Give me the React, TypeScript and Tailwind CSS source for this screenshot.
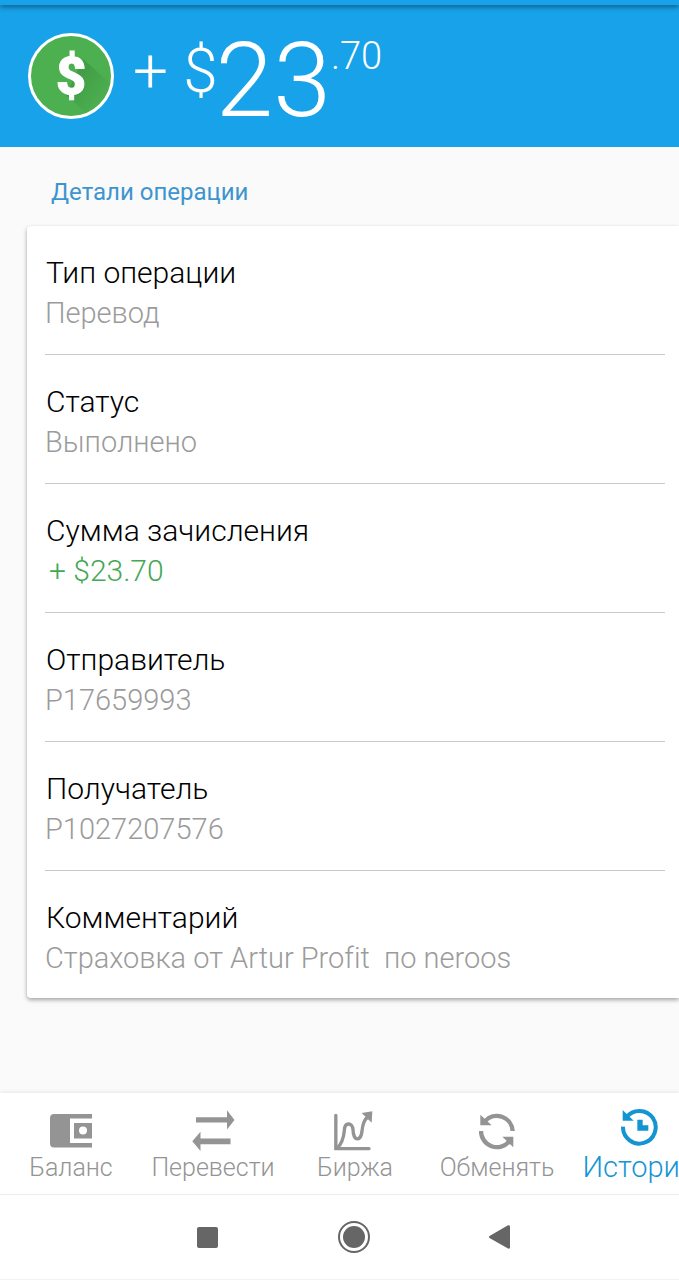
import type { ReactNode } from "react";

type Detail = {
  label: string;
  value: string;
  income?: boolean;
};

const DETAILS: Detail[] = [
  { label: "Тип операции", value: "Перевод" },
  { label: "Статус", value: "Выполнено" },
  { label: "Сумма зачисления", value: "+ $23.70", income: true },
  { label: "Отправитель", value: "P17659993" },
  { label: "Получатель", value: "P1027207576" },
  { label: "Комментарий", value: "Страховка от Artur Profit  по neroos" },
];

function WalletIcon() {
  return (
    <svg width="42" height="34" viewBox="0 0 42 34" fill="currentColor" aria-hidden="true">
      <path d="M4 0H42V4.500H20V29H42V33.500H4A4 4 0 0 1 0 29.500V4A4 4 0 0 1 4 0Z" />
      <path
        fillRule="evenodd"
        d="M24 9H42V24.500H24ZM33 12.500A4 4 0 1 0 33 20.500A4 4 0 1 0 33 12.500Z"
      />
    </svg>
  );
}

function TransferIcon() {
  return (
    <svg width="43" height="41" viewBox="0 0 43 41" fill="currentColor" aria-hidden="true">
      <path d="M4 7.200H35V.200L42.500 9.900L35 19.600V12.600H4Z" />
      <path d="M38.500 28.500V34.200H8.500V41L.300 31.200L8.500 21.700V28.500Z" />
    </svg>
  );
}

function ChartIcon() {
  return (
    <svg width="43" height="40" viewBox="0 0 129 120" fill="none" stroke="currentColor" aria-hidden="true">
      <path d="M5.500 13V113H105" strokeWidth="10" strokeLinecap="round" />
      <path
        d="M9 112C24 98 29 82 31 58C32 33 55 33 57 56C58 92 81 92 84 60C86 38 91 25 102 18"
        strokeWidth="10"
      />
      <path d="M83 6L115 1L113 35Z" fill="currentColor" stroke="none" />
    </svg>
  );
}

function ExchangeIcon() {
  return (
    <svg width="36" height="38" viewBox="0 0 108 114" fill="none" stroke="currentColor" aria-hidden="true">
      <path d="M17 28A48 48 0 0 1 101 57" strokeWidth="13" />
      <path d="M91 88A48 48 0 0 1 6 57" strokeWidth="13" />
      <path d="M4 8V40H38Z" fill="currentColor" stroke="none" />
      <path d="M103 106V74H70Z" fill="currentColor" stroke="none" />
    </svg>
  );
}

function HistoryIcon() {
  return (
    <svg width="37" height="38" viewBox="0 0 111 114" fill="none" stroke="currentColor" aria-hidden="true">
      <path d="M16 28A49 49 0 1 1 6 56" strokeWidth="12" />
      <path d="M5 6V38H38Z" fill="currentColor" stroke="none" />
      <path d="M57 35V60H82" strokeWidth="16" />
    </svg>
  );
}

function DollarCoin() {
  return (
    <svg width="86" height="86" viewBox="0 0 86 86" className="mt-0.5 shrink-0" aria-hidden="true">
      <defs>
        <linearGradient id="coinShade" x1="0" y1="0" x2="1" y2="1">
          <stop offset="0.3" stopColor="#2e7d32" stopOpacity="0.35" />
          <stop offset="0.8" stopColor="#2e7d32" stopOpacity="0" />
        </linearGradient>
      </defs>
      <circle cx="43" cy="43" r="41.500" fill="#4caf50" stroke="#fff" strokeWidth="3" />
      <path d="M55 26L82 50A40 40 0 0 1 58 80L38 62Z" fill="url(#coinShade)" />
      <text
        x="43"
        y="61"
        textAnchor="middle"
        fill="#fff"
        stroke="#fff"
        strokeWidth="1"
        className="font-['Roboto'] text-[52px] font-black"
      >
        $
      </text>
    </svg>
  );
}

type Tab = {
  label: string;
  icon: ReactNode;
  active?: boolean;
};

const TABS: Tab[] = [
  { label: "Баланс", icon: <WalletIcon /> },
  { label: "Перевести", icon: <TransferIcon /> },
  { label: "Биржа", icon: <ChartIcon /> },
  { label: "Обменять", icon: <ExchangeIcon /> },
  { label: "История", icon: <HistoryIcon />, active: true },
];

function AmountHeader() {
  return (
    <header className="bg-[#18a2ea] text-white">
      <div className="h-[5px] shadow-[0_2px_5px_rgba(0,0,0,0.45)]" />
      <h1 className="flex h-[142px] items-start pt-[26px] pl-7 font-light">
        <DollarCoin />
        <span className="mt-2.5 ml-[19px] text-[62px] leading-[60px] whitespace-pre">+ $</span>
        <span className="-ml-0.5 text-[104px] leading-[100px]">23</span>
        <span className="mt-[5px] text-[38px] leading-10">.70</span>
      </h1>
    </header>
  );
}

function DetailRow({ label, value, income }: Detail) {
  return (
    <div className="border-b border-[#c8c8c8] pt-[27px] pb-[21px] last:border-b-0 last:pb-5">
      <dt className="pl-px text-[30px] leading-10 text-black">{label}</dt>
      <dd
        className={
          "leading-10 whitespace-pre-wrap [font-variant-ligatures:none] " +
          (income ? "pl-1 text-[30px] text-[#43a854]" : "text-[29px] text-[#9b9b9b]")
        }
      >
        {value}
      </dd>
    </div>
  );
}

// Пять вкладок фиксированной ширины: на узком экране последняя уходит за край.
function TabBar() {
  return (
    <nav className="flex h-[102px] overflow-hidden border-b border-[#ececec] bg-white shadow-[0_-1px_4px_rgba(0,0,0,0.08)]">
      {TABS.map((tab) => (
        <a
          key={tab.label}
          href="#"
          aria-current={tab.active ? "page" : undefined}
          className={
            "flex w-[142px] shrink-0 flex-col items-center " +
            (tab.active ? "text-[#1495d3]" : "text-[#949494]")
          }
        >
          <span
            className={
              "flex items-center " + (tab.active ? "h-[60px] pt-2" : "h-[61px] pt-3.5")
            }
          >
            {tab.icon}
          </span>
          <span className={"leading-7 " + (tab.active ? "text-[29px]" : "text-[25px]")}>
            {tab.label}
          </span>
        </a>
      ))}
    </nav>
  );
}

function SystemBar() {
  return (
    <div className="flex h-[85px] items-center justify-center gap-[110px] border-b border-[#f2f2f2] bg-white pl-7 text-[#666]">
      <button type="button" aria-label="Недавние" className="flex w-9 justify-center">
        <span className="size-[21px] rounded-xs bg-current" />
      </button>
      <button type="button" aria-label="Домой" className="flex w-9 justify-center">
        <svg width="32" height="32" viewBox="0 0 32 32" aria-hidden="true">
          <circle cx="16" cy="16" r="15" fill="none" stroke="currentColor" strokeWidth="2" />
          <circle cx="16" cy="16" r="11" fill="currentColor" />
        </svg>
      </button>
      <button type="button" aria-label="Назад" className="flex w-9 justify-center">
        <svg width="21" height="24" viewBox="0 0 21 24" fill="currentColor" aria-hidden="true">
          <path d="M.500 11L19 .300Q21 0 21 1.500V22.500Q21 24 19 23.500L.500 13Q-.500 12 .500 11Z" />
        </svg>
      </button>
    </div>
  );
}

export default function App() {
  return (
    <div className="flex min-h-screen flex-col overflow-hidden bg-[#fafafa] font-['Roboto',sans-serif] font-light">
      <AmountHeader />
      <main className="flex-1">
        <h2 className="pt-[29px] pl-[51px] text-[24px] leading-8 font-normal text-[#3d95cf]">
          Детали операции
        </h2>
        <dl className="mt-[18px] ml-[27px] rounded-l-sm bg-white pr-3.5 pl-[18px] shadow-[0_2px_4px_rgba(0,0,0,0.35)]">
          {DETAILS.map((detail) => (
            <DetailRow key={detail.label} {...detail} />
          ))}
        </dl>
      </main>
      <TabBar />
      <SystemBar />
    </div>
  );
}
